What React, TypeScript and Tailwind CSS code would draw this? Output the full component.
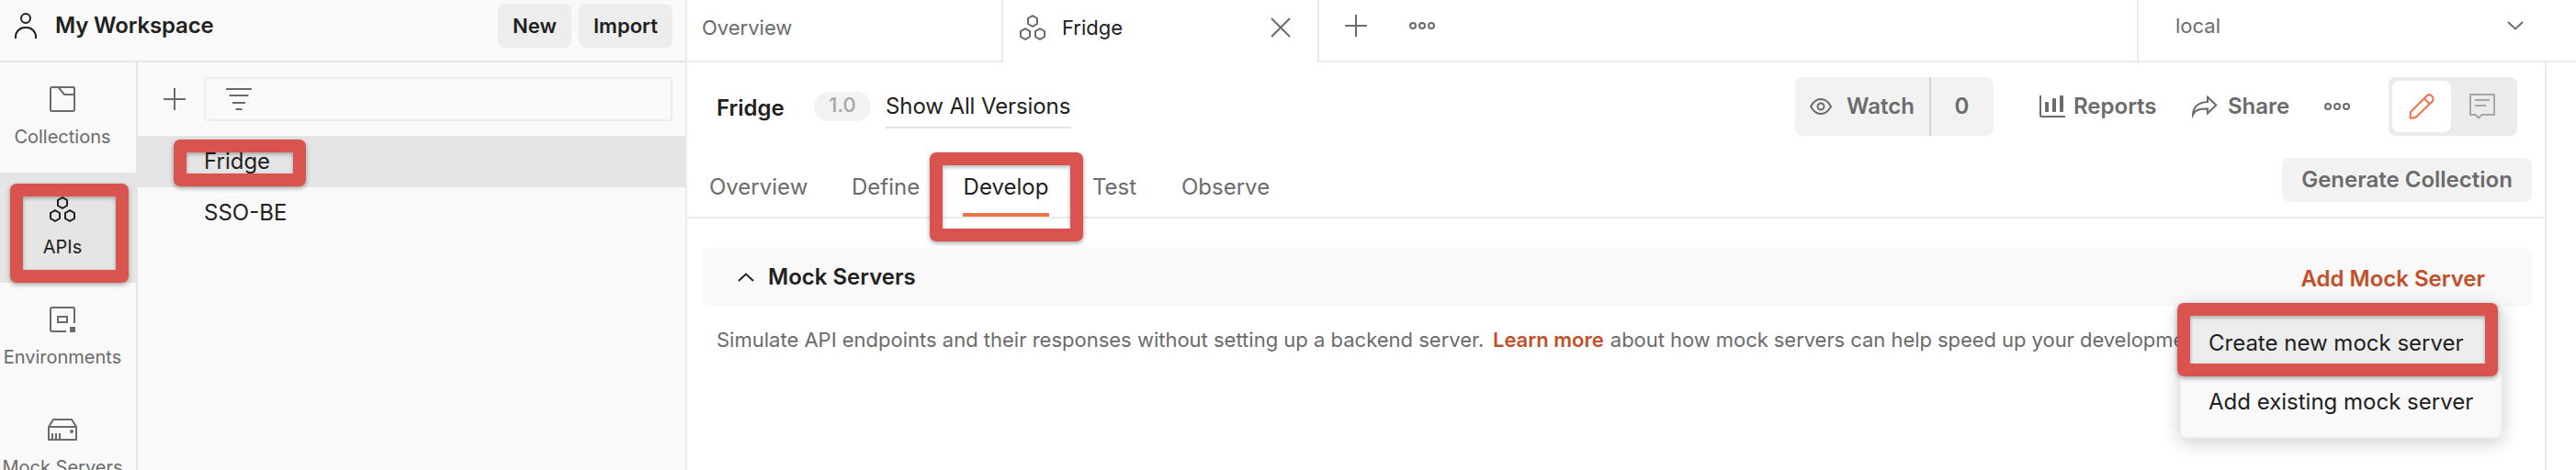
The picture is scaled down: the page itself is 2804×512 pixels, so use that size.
import type { ReactNode } from 'react';

type IconProps = { className?: string };

function UserIcon() {
  return (
    <svg width="24" height="28" viewBox="0 0 24 28" fill="none" stroke="#212121" strokeWidth="2">
      <circle cx="12" cy="6" r="5" />
      <path d="M1 28V26A10 10 0 0 1 11 16H13A10 10 0 0 1 23 26V28" />
    </svg>
  );
}

function CollectionIcon() {
  return (
    <svg width="28" height="28" viewBox="0 0 28 28" fill="none" stroke="#6b6b6b" strokeWidth="2">
      <rect x="1" y="1" width="26" height="26" rx="1.5" />
      <path d="M9.5 1L16 9H27" />
    </svg>
  );
}

function ApiIcon({ className }: IconProps) {
  return (
    <svg className={className} width="28" height="28" viewBox="0 0 28 28" fill="none" stroke="currentColor" strokeWidth="2">
      <path d="M14 1.2L19 4V10L14 12.8L9 10V4Z" />
      <path d="M6 15.2L11 18V24L6 26.8L1 24V18Z" />
      <path d="M22 15.2L27 18V24L22 26.8L17 24V18Z" />
    </svg>
  );
}

function EnvironmentIcon() {
  return (
    <svg width="28" height="28" viewBox="0 0 28 28" fill="none" stroke="#6b6b6b" strokeWidth="2">
      <path d="M27 18V2.5Q27 1 25.5 1H2.5Q1 1 1 2.5V25.5Q1 27 2.5 27H18" />
      <rect x="9" y="11" width="10" height="6" />
      <rect x="22" y="22" width="6" height="6" fill="#6b6b6b" stroke="none" />
    </svg>
  );
}

function ServerIcon() {
  return (
    <svg width="32" height="24" viewBox="0 0 32 24" fill="none" stroke="#6b6b6b" strokeWidth="2">
      <path d="M1 9H31V23H1Z" strokeLinejoin="round" />
      <path d="M1 9L6 1H26L31 9" strokeLinejoin="round" />
      <path d="M5 16V23M9 16V23M13 16V23" />
      <circle cx="26" cy="14" r="2" fill="#6b6b6b" stroke="none" />
    </svg>
  );
}

function PlusIcon() {
  return (
    <svg width="24" height="24" viewBox="0 0 24 24" fill="none" stroke="#6b6b6b" strokeWidth="2">
      <path d="M12 0V24M0 12H24" />
    </svg>
  );
}

function FilterIcon() {
  return (
    <svg width="28" height="24" viewBox="0 0 28 24" fill="none" stroke="#6b6b6b" strokeWidth="2">
      <path d="M0 1H28M3.5 8H24.5M7 16H21M10.5 23H17.5" />
    </svg>
  );
}

function CloseIcon() {
  return (
    <svg width="22" height="22" viewBox="0 0 22 22" fill="none" stroke="#6b6b6b" strokeWidth="2">
      <path d="M1 1L21 21M21 1L1 21" />
    </svg>
  );
}

function MoreIcon() {
  return (
    <svg width="28" height="8" viewBox="0 0 28 8" fill="none" stroke="#6b6b6b" strokeWidth="2">
      <circle cx="4" cy="4" r="3" />
      <circle cx="14" cy="4" r="3" />
      <circle cx="24" cy="4" r="3" />
    </svg>
  );
}

function EyeIcon() {
  return (
    <svg width="24" height="18" viewBox="0 0 24 18" fill="none" stroke="#6b6b6b" strokeWidth="2">
      <path d="M1 9C4 3.5 8 1 12 1S20 3.5 23 9C20 14.5 16 17 12 17S4 14.5 1 9Z" strokeLinejoin="round" />
      <circle cx="12" cy="9" r="3.5" />
    </svg>
  );
}

function ReportsIcon() {
  return (
    <svg width="28" height="24" viewBox="0 0 28 24" fill="#6b6b6b">
      <path d="M1 0V22Q1 23 2 23H28" fill="none" stroke="#6b6b6b" strokeWidth="2" />
      <rect x="6" y="7" width="4" height="11" rx="0.8" />
      <rect x="14" y="3" width="4" height="15" rx="0.8" />
      <rect x="22" y="0" width="4" height="18" rx="0.8" />
    </svg>
  );
}

function ShareIcon() {
  return (
    <svg width="28" height="27" viewBox="0 0 28 27" fill="none" stroke="#6b6b6b" strokeWidth="2" strokeMiterlimit="10">
      <path d="M17 2.8L26.3 11.5L17 20.5V15.5C9 15.5 4 16 1 22C1.5 13 7 8.5 17 8Z" />
    </svg>
  );
}

function PencilIcon() {
  return (
    <svg width="28" height="28" viewBox="0 0 28 28" fill="none" stroke="#ee7446" strokeWidth="2" strokeLinejoin="round">
      <path d="M1.5 26.5L2 20L20 2Q22.5 0 25 2.5T26 8L8 25.5Q5 27 1.5 26.5Z" />
      <path d="M17 5.5L22.5 11" />
    </svg>
  );
}

function CommentIcon() {
  return (
    <svg width="28" height="28" viewBox="0 0 28 28" fill="none" stroke="#a6a6a6" strokeWidth="2" strokeLinejoin="round">
      <path d="M1 1H27V23H13.5L10 26.5L6.5 23H1Z" />
      <path d="M6 7H22M6 13H18" />
    </svg>
  );
}

function Chevron({ up }: { up?: boolean }) {
  return (
    <svg width="18" height="10" viewBox="0 0 18 10" fill="none" stroke={up ? '#212121' : '#6b6b6b'} strokeWidth="2">
      <path d={up ? 'M1 9L9 1.5L17 9' : 'M1 1L9 8.5L17 1'} />
    </svg>
  );
}

function Highlight({ className }: IconProps) {
  return (
    <div
      className={`pointer-events-none absolute z-20 rounded-[7px] shadow-[0_2px_5px_rgba(0,0,0,0.35)] ${className}`}
    >
      <div className="h-full w-full rounded-[7px] border-[14px] border-[#d9534f]">
        <div className="h-full w-full shadow-[inset_0_2px_4px_rgba(0,0,0,0.3)]" />
      </div>
    </div>
  );
}

function NavItem({ icon, label, active }: { icon: ReactNode; label: string; active?: boolean }) {
  return (
    <div
      className={`relative flex h-[120px] shrink-0 flex-col items-center pr-3 ${active ? 'bg-[#e5e5e5] text-[#212121]' : 'text-[#6b6b6b]'}`}
    >
      <div className="mt-[26px] flex h-7 items-center">{icon}</div>
      <div className="mt-[15px] text-[20px] leading-6 whitespace-nowrap">{label}</div>
      {active && <Highlight className="top-3 left-[11px] h-[108px] w-[129px]" />}
    </div>
  );
}

function Sidebar() {
  return (
    <aside className="flex w-[748px] shrink-0 flex-col border-r-2 border-[#ededed] bg-[#f9f9f9]">
      <div className="flex h-[68px] shrink-0 items-start border-b-2 border-[#e5e5e5] pl-4">
        <div className="mt-[14px]"><UserIcon /></div>
        <div className="mt-[13px] ml-5 text-[24px] leading-[29px] font-semibold tracking-[-0.15px]">My Workspace</div>
        <div className="mt-1 mr-[14px] ml-auto flex gap-2 text-[22px] font-semibold">
          <div className="flex h-12 w-20 items-center justify-center rounded-lg bg-[#ededed]">New</div>
          <div className="flex h-12 w-[102px] items-center justify-center rounded-lg bg-[#ededed]">Import</div>
        </div>
      </div>
      <div className="flex min-h-0 flex-1">
        <nav className="flex w-[150px] shrink-0 flex-col border-r-2 border-[#e5e5e5]">
          <NavItem icon={<CollectionIcon />} label="Collections" />
          <NavItem icon={<ApiIcon />} label="APIs" active />
          <NavItem icon={<EnvironmentIcon />} label="Environments" />
          <NavItem icon={<ServerIcon />} label="Mock Servers" />
        </nav>
        <div className="flex min-w-0 flex-1 flex-col text-[24px]">
          <div className="flex h-20 items-center pr-[14px] pl-7">
            <PlusIcon />
            <div className="ml-5 flex h-12 flex-1 items-center rounded-[4px] border-2 border-[#ededed] pl-[22px]">
              <FilterIcon />
            </div>
          </div>
          <div className="relative flex h-14 items-center bg-[#e5e5e5] pb-px pl-[72px]">
            Fridge
            <Highlight className="top-1 left-[39px] h-[51px] w-[144px]" />
          </div>
          <div className="flex h-14 items-center pb-px pl-[72px]">SSO-BE</div>
        </div>
      </div>
    </aside>
  );
}

function TabBar() {
  return (
    <div className="flex h-[68px] shrink-0 text-[22px] text-[#6b6b6b]">
      <div className="flex w-[344px] items-center border-r-2 border-b-2 border-[#ebebeb] pb-[6px] pl-4">
        <span>Overview</span>
      </div>
      <div className="flex w-[342px] items-center pb-2 pl-[18px]">
        <ApiIcon />
        <span className="ml-[18px] text-[#212121]">Fridge</span>
        <div className="mr-[29px] ml-auto"><CloseIcon /></div>
      </div>
      <div className="flex flex-1 items-center border-b-2 border-l-2 border-[#ebebeb] pb-[10px] pl-7">
        <PlusIcon />
        <div className="ml-[46px]"><MoreIcon /></div>
      </div>
      <div className="flex w-[478px] items-center border-b-2 border-l-2 border-[#ebebeb] pb-[10px] pl-10">
        <span>local</span>
        <div className="mr-[57px] ml-auto"><Chevron /></div>
      </div>
    </div>
  );
}

function ApiHeader() {
  return (
    <div className="flex h-24 shrink-0 items-center pr-[30px] pl-8 text-[24px] text-[#212121]">
      <div className="mt-[35px] w-[106px] self-start leading-[29px] font-semibold">Fridge</div>
      <div className="flex h-8 w-[62px] justify-center rounded-full bg-[#f2f2f2] pt-px text-[22px] leading-[26px] font-medium text-[#a6a6a6]">1.0</div>
      <div className="mt-6 ml-4 h-12 w-[202px] self-start border-b-2 border-[#e5e5e5] pt-[9px] leading-[29px] tracking-[-0.1px] whitespace-nowrap">Show All Versions</div>
      <div className="ml-auto flex items-center font-semibold text-[#6b6b6b]">
        <div className="flex h-16 w-[216px] rounded-lg bg-[#f2f2f2]">
          <div className="flex w-[148px] items-center border-r-2 border-[#d9d9d9] pl-4">
            <EyeIcon />
            <span className="ml-4 pb-px">Watch</span>
          </div>
          <div className="flex flex-1 items-center justify-center pr-px pb-px">0</div>
        </div>
        <div className="ml-[50px] flex w-[166px] items-center">
          <ReportsIcon />
          <span className="ml-[9px] pb-px">Reports</span>
        </div>
        <div className="flex w-[144px] items-center">
          <ShareIcon />
          <span className="ml-[11px] pb-px">Share</span>
        </div>
        <div className="w-[70px]"><MoreIcon /></div>
        <div className="flex h-16 w-[140px] rounded-lg bg-[#ebebeb] p-1">
          <div className="flex w-16 items-center justify-center rounded-lg bg-white"><PencilIcon /></div>
          <div className="flex w-[68px] items-center justify-center"><CommentIcon /></div>
        </div>
      </div>
    </div>
  );
}

function ApiTabs() {
  return (
    <div className="flex h-[74px] shrink-0 border-b-2 border-[#ebebeb] pr-[14px] pl-6 text-[24px] leading-[29px] text-[#6b6b6b]">
      <div className="w-[155px] pt-[25px]">Overview</div>
      <div className="w-[121px] pt-[25px]">Define</div>
      <div className="relative w-[94px] border-b-4 border-[#ee7446] pt-[25px] text-center text-[#212121]">
        Develop
        <Highlight className="top-[2px] -left-9 h-[97px] w-[167px]" />
      </div>
      <div className="ml-[47px] w-[97px] pt-[25px]">Test</div>
      <div className="pt-[25px]">Observe</div>
      <div className="mt-2 ml-auto flex h-12 w-[272px] items-center justify-center rounded-lg bg-[#f2f2f2] pb-px font-semibold">
        Generate Collection
      </div>
    </div>
  );
}

function MockServerMenu() {
  return (
    <div className="absolute top-[62px] left-[1608px] z-10 flex h-[146px] w-[352px] flex-col rounded-lg border-2 border-[#ededed] bg-[#f9f9f9] py-1.5 text-[24px] text-[#212121] shadow-[0_4px_20px_rgba(0,0,0,0.2)]">
      <div className="flex h-16 items-center bg-[#ededed] pt-[3px] pl-[30px] whitespace-nowrap">Create new mock server</div>
      <div className="flex h-16 items-center pt-[3px] pl-[30px] whitespace-nowrap">Add existing mock server</div>
      <Highlight className="-top-1 -left-1 h-20 w-[349px]" />
    </div>
  );
}

function Content() {
  return (
    <div className="relative mt-8 mr-[14px] ml-4">
      <div className="flex h-16 items-center rounded-lg bg-[#f9f9f9] pr-[51px] pl-[39px] text-[24px] font-semibold">
        <Chevron up />
        <span className="ml-[15px] pb-px">Mock Servers</span>
        <span className="ml-auto pt-[3px] text-[#c34f28]">Add Mock Server</span>
      </div>
      <p className="pt-[23px] pl-4 text-[22px] leading-[26px] whitespace-nowrap text-[#6b6b6b]">
        Simulate API endpoints and their responses without setting up a backend server.{' '}
        <span className="mr-px ml-[3.5px] font-semibold text-[#c34f28]">Learn more</span>{' '}
        <span className="tracking-[-0.05px]">about how mock servers can help speed up your development.</span>
      </p>
      <MockServerMenu />
    </div>
  );
}

export default function App() {
  return (
    <div className="flex h-[512px] w-[2804px] overflow-hidden bg-white font-['Inter',sans-serif] text-[#212121]">
      <Sidebar />
      <main className="flex min-w-0 flex-1 flex-col">
        <TabBar />
        <div className="flex min-h-0 flex-1">
          <div className="w-[2024px] shrink-0 overflow-hidden border-r-2 border-[#ebebeb]">
            <ApiHeader />
            <ApiTabs />
            <Content />
          </div>
        </div>
      </main>
    </div>
  );
}
